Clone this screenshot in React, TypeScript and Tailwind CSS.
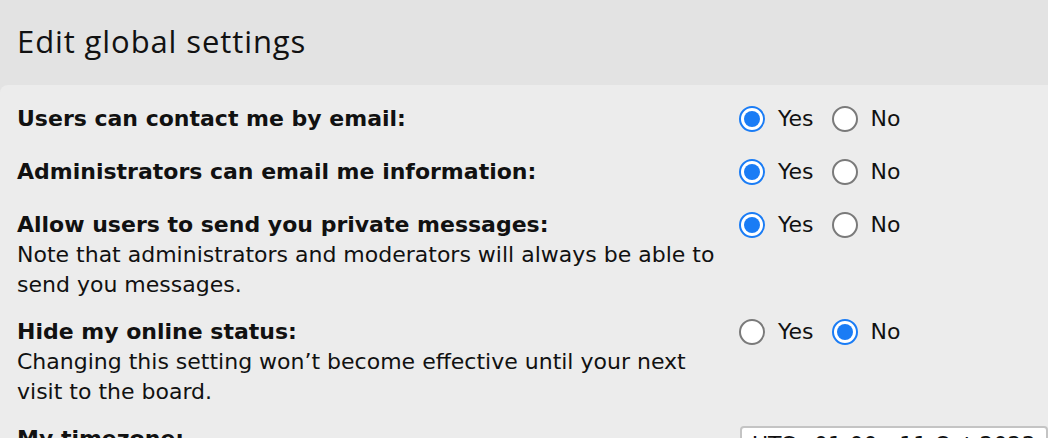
import React, { useState } from 'react';

interface Setting {
  id: string;
  label: string;
  explain?: string;
  value: boolean;
}

const initialSettings: Setting[] = [
  { id: 'allowemail', label: 'Users can contact me by email:', value: true },
  { id: 'massemail', label: 'Administrators can email me information:', value: true },
  {
    id: 'allowpm',
    label: 'Allow users to send you private messages:',
    explain: 'Note that administrators and moderators will always be able to send you messages.',
    value: true,
  },
  {
    id: 'hideonline',
    label: 'Hide my online status:',
    explain: 'Changing this setting won\u2019t become effective until your next visit to the board.',
    value: false,
  },
];

const Radio: React.FC<{ checked: boolean }> = ({ checked }) => (
  <span
    className={
      checked
        ? 'flex h-[26px] w-[26px] shrink-0 items-center justify-center rounded-full border-2 border-[#1a7cf5] bg-white'
        : 'flex h-[26px] w-[26px] shrink-0 items-center justify-center rounded-full border-2 border-[#7a7a7a] bg-white'
    }
  >
    {checked && <span className="h-[16px] w-[16px] rounded-full bg-[#1a7cf5]" />}
  </span>
);

export default function App() {
  const [settings, setSettings] = useState(initialSettings);

  const setValue = (id: string, value: boolean) => {
    setSettings((prev) => prev.map((s) => (s.id === id ? { ...s, value } : s)));
  };

  return (
    <div className="h-[438px] w-[1048px] overflow-hidden bg-[#e3e3e3] text-[#111] font-['DejaVu_Sans',Verdana,sans-serif]">
      <h2 className="h-[85px] pl-[17px] pt-[21px] text-[31px] leading-[40px] tracking-[0.9px] font-['Open_Sans',sans-serif] text-[#111]">
        Edit global settings
      </h2>
      <div className="h-[400px] rounded-tl-[8px] bg-[#ececec] pt-[11px]">
        {settings.map((s) => (
          <div key={s.id} className="flex items-start pl-[17px] pt-[8px] pb-[9px] text-[22px] leading-[30px]">
            <div className="min-h-[36px] w-[712px] shrink-0">
              <label className="font-bold">{s.label}</label>
              {s.explain && <div>{s.explain}</div>}
            </div>
            <div className="ml-[10px] flex h-[30px] items-center">
              <label className="flex cursor-pointer items-center" onClick={() => setValue(s.id, true)}>
                <Radio checked={s.value} />
                <span className="ml-[13px]">Yes</span>
              </label>
              <label className="ml-[18px] flex cursor-pointer items-center" onClick={() => setValue(s.id, false)}>
                <Radio checked={!s.value} />
                <span className="ml-[13px]">No</span>
              </label>
            </div>
          </div>
        ))}
        <div className="flex items-start pl-[17px] pt-[8px] text-[22px] leading-[30px]">
          <div className="w-[712px] shrink-0 font-bold">My timezone:</div>
          <div className="ml-[11px] mt-[2px] h-[38px] flex-1 overflow-hidden whitespace-nowrap rounded-[4px] border-2 border-[#c4c4c4] bg-white px-[10px] leading-[34px]">
            UTC+01:00 - 11 Oct 2023, 10:42
          </div>
        </div>
      </div>
    </div>
  );
}
